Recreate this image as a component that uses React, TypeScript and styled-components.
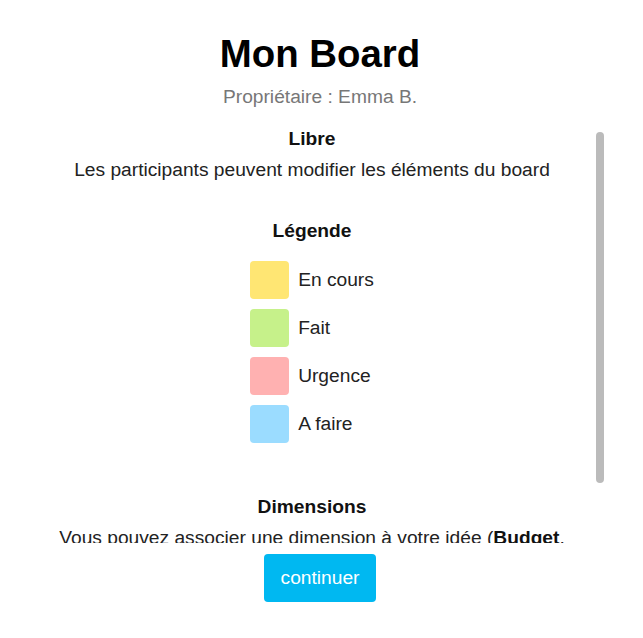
import * as React from 'react';
import styled, { createGlobalStyle } from 'styled-components';

const GlobalStyle = createGlobalStyle`
	body {
		margin: 0;
		background: #fff;
		font-family: "Liberation Sans", Arial, sans-serif;
		color: #222;
	}
`;

interface LegendEntry {
	label: string;
	color: string;
}

const legend: LegendEntry[] = [
	{ label: 'En cours', color: '#ffe673' },
	{ label: 'Fait', color: '#c6f18a' },
	{ label: 'Urgence', color: '#ffb1b1' },
	{ label: 'A faire', color: '#9bdcff' },
];

class App extends React.Component<{}, {}> {
	render() {
		return (
			<Page>
				<GlobalStyle />
				<Title>Mon Board</Title>
				<Owner>Propriétaire : Emma B.</Owner>
				<ScrollFrame>
					<Scroller>
						<Section>
							<Heading>Libre</Heading>
							<Text>Les participants peuvent modifier les éléments du board</Text>
						</Section>
						<Section>
							<Heading>Légende</Heading>
							<LegendList>
								{
									legend.map((entry: LegendEntry) => (
										<LegendRow key={entry.label}>
											<Swatch $color={entry.color} />
											<span>{entry.label}</span>
										</LegendRow>
										)
									)
								}
							</LegendList>
						</Section>
						<Section>
							<Heading>Dimensions</Heading>
							<Text>
								Vous pouvez associer une dimension à votre idée (<b>Budget</b>, <b>Délai</b>,
								{' '}<b>Impact</b>...) afin de mieux les comparer et les prioriser sur le board.
							</Text>
						</Section>
					</Scroller>
					<Thumb />
				</ScrollFrame>
				<Button type="button">continuer</Button>
			</Page>
		);
	}
}

const Page = styled.div`
	display: flex;
	flex-direction: column;
	align-items: center;
	padding: 32px 3px 0 0;
`;

const Title = styled.h1`
	margin: 0;
	font-size: 38.4px;
	font-weight: bold;
	color: #000;
`;

const Owner = styled.div`
	margin-top: 10px;
	font-size: 19.2px;
	color: #777;
`;

const ScrollFrame = styled.div`
	position: relative;
	align-self: stretch;
	margin: 14px 36px 0 28px;
	height: 421px;
	padding-right: 8px;
`;

const Scroller = styled.div`
	height: 100%;
	overflow-y: auto;
	scrollbar-width: none;
	display: flex;
	flex-direction: column;
	gap: 39px;
	padding: 6px 20px 12px;
	box-sizing: border-box;
	text-align: center;
`;

const Thumb = styled.div`
	position: absolute;
	top: 10px;
	right: 0;
	width: 8px;
	height: 351px;
	border-radius: 4px;
	background: #bbb;
`;

const Section = styled.section`
	display: flex;
	flex-direction: column;
	align-items: center;
	flex-shrink: 0;
`;

const Heading = styled.h3`
	margin: 0 0 9px;
	font-size: 19.2px;
	font-weight: bold;
	color: #111;
`;

const Text = styled.p`
	margin: 0;
	font-size: 19.2px;
	color: #222;

	b {
		color: #111;
	}
`;

const LegendList = styled.div`
	display: flex;
	flex-direction: column;
	gap: 10px;
	margin: 10px 0 14px;
`;

const LegendRow = styled.div`
	display: flex;
	align-items: center;
	gap: 9px;
	font-size: 19.2px;
	color: #222;
`;

const Swatch = styled.div<{ $color: string }>`
	width: 39px;
	height: 38px;
	border-radius: 4px;
	background-color: ${(p) => p.$color};
`;

const Button = styled.button`
	margin-top: 11px;
	height: 48px;
	padding: 0 17px;
	border: none;
	border-radius: 4px;
	background: #00b8f1;
	color: #fff;
	font-family: "Liberation Sans", Arial, sans-serif;
	font-size: 19.2px;
	cursor: pointer;
`;

export default App;
